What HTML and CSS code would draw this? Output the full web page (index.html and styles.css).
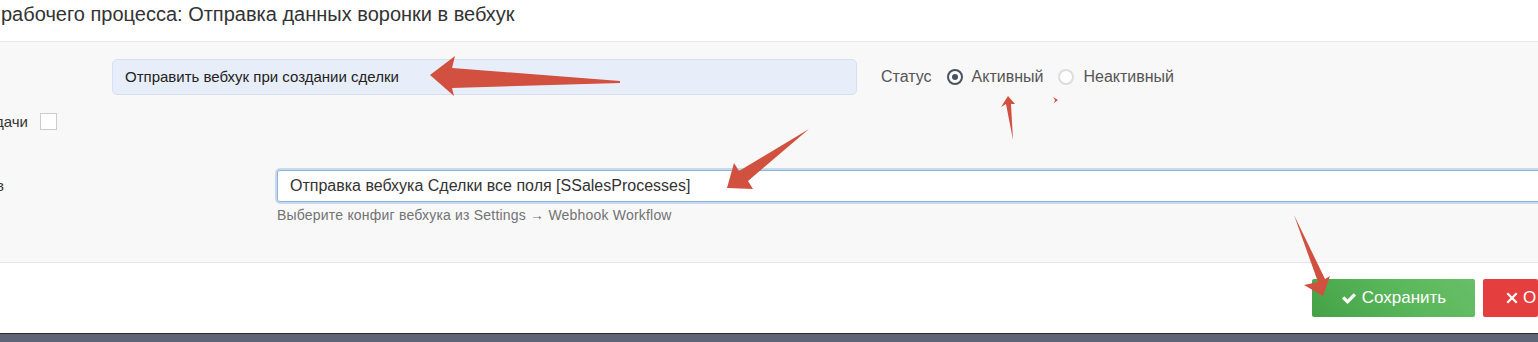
FILE: index.html
```html
<!DOCTYPE html>
<html>
<head>
    <meta name="viewport" content="width=device-width, initial-scale=1">
    <title>Workflow</title>
    <link rel="stylesheet" href="styles.css">
</head>
<body>
    <div class="page">
        <div class="modal-header">
            <h4 class="modal-title">рабочего процесса: Отправка данных воронки в вебхук</h4>
        </div>
        <div class="modal-body">
            <div class="row-top">
                <div class="name-box">Отправить вебхук при создании сделки</div>
                <div class="status-group">
                    <span class="status-label">Статус</span>
                    <label class="radio"><span class="radio-dot checked"></span>Активный</label>
                    <label class="radio"><span class="radio-dot"></span>Неактивный</label>
                </div>
            </div>
            <div class="row-check">
                <span class="clip-label">дачи</span>
                <span class="checkbox"></span>
            </div>
            <div class="row-config">
                <span class="clip-label">в</span>
                <div class="config-field">
                    <div class="config-input">Отправка вебхука Сделки все поля [SSalesProcesses]</div>
                    <div class="help-text">Выберите конфиг вебхука из Settings → Webhook Workflow</div>
                </div>
            </div>
        </div>
        <div class="modal-footer">
            <button class="btn btn-save">
                <svg class="btn-icon" width="16" height="14" viewBox="0 0 16 14"><path d="M1 7.5l2.3-2.3 3.2 3.2L12.7 2.2 15 4.5 6.5 13z" fill="#fff"/></svg>Сохранить
            </button>
            <button class="btn btn-cancel">
                <svg class="btn-icon" width="12" height="12" viewBox="0 0 12 12"><path d="M2 0.5L6 4.5 10 0.5 11.5 2 7.5 6 11.5 10 10 11.5 6 7.5 2 11.5 0.5 10 4.5 6 0.5 2z" fill="#fff"/></svg>О
            </button>
        </div>
        <div class="taskbar"></div>

        <!-- annotation arrows drawn over the screenshot -->
        <svg class="arrows" width="1538" height="342" viewBox="0 0 1538 342">
            <polygon points="430,75 455,56 452,68 620,81 620,83 452,88 454,96" />
            <polygon points="727,188 734,163 739,171 809,129 748,181 753,189" />
            <polygon points="1008,96 1015,104 1011,104 1013,140 1006,104 1001,107" />
            <polygon points="1053,97 1058,100 1054,103 1055,100" />
            <polygon points="1294,215 1318,282 1304,285 1323,296 1330,276 1325,279" />
        </svg>
    </div>
</body>
</html>
```

FILE: styles.css
```css
body {
    margin: 0;
    background: #fff;
    color: #333;
    font-family: "Liberation Sans", Arial, Helvetica, sans-serif;
}

.page {
    position: relative;
    width: 1538px;
    height: 342px;
    overflow: hidden;
}

.modal-header {
    height: 42px;
    border-bottom: 1px solid #e9e9e9;
    box-sizing: border-box;
}

.modal-title {
    margin: 0;
    padding: 0 0 0 1px;
    font-size: 20px;
    font-weight: normal;
    line-height: 28px;
    color: #333;
}

.modal-body {
    background: #f8f8f9;
    height: 221px;
    border-bottom: 1px solid #e6e6e6;
    box-sizing: border-box;
    padding-top: 17px;
}

.row-top {
    display: flex;
    align-items: center;
    padding-left: 112px;
}

.name-box {
    width: 745px;
    height: 36px;
    box-sizing: border-box;
    background: #e8eef9;
    border: 1px solid #d8e0ee;
    border-radius: 5px;
    padding-left: 12px;
    font-size: 15px;
    line-height: 34px;
    color: #222;
}

.status-group {
    display: flex;
    align-items: center;
    margin-left: 24px;
    font-size: 16px;
    color: #555;
}

.status-label {
    margin-right: 15px;
}

.radio {
    display: flex;
    align-items: center;
    margin-right: 15px;
}

.radio-dot {
    width: 16px;
    height: 16px;
    box-sizing: border-box;
    border: 2px solid #ddd;
    border-radius: 50%;
    background: #fff;
    margin-right: 9px;
    display: flex;
    align-items: center;
    justify-content: center;
}

.radio-dot.checked {
    border-color: #4a5160;
}

.radio-dot.checked::after {
    content: "";
    width: 6px;
    height: 6px;
    border-radius: 50%;
    background: #4a5160;
}

.clip-label {
    font-size: 15px;
    color: #333;
    white-space: nowrap;
    text-align: right;
}

.row-check {
    display: grid;
    grid-template-columns: 40px 17px;
    align-items: center;
    margin-top: 18px;
}

.row-check .clip-label {
    padding-right: 12px;
    direction: rtl;
    overflow: hidden;
}

.checkbox {
    width: 17px;
    height: 17px;
    box-sizing: border-box;
    border: 1px solid #ccc;
    background: #fff;
}

.row-config {
    display: grid;
    grid-template-columns: 277px 1300px;
    align-items: start;
    margin-top: 40px;
}

.row-config .clip-label {
    margin-left: -4px;
    text-align: left;
    line-height: 32px;
}

.config-input {
    height: 32px;
    box-sizing: border-box;
    border: 1px solid #8eb3d9;
    border-radius: 3px;
    background: #fff;
    box-shadow: 0 0 0 2px #c7d9ec;
    padding-left: 12px;
    font-size: 16px;
    line-height: 30px;
    color: #333;
}

.help-text {
    margin-top: 5px;
    font-size: 14px;
    letter-spacing: 0.2px;
    color: #737373;
}

.modal-footer {
    height: 70px;
    display: flex;
    align-items: flex-start;
    padding-top: 16px;
    padding-left: 1312px;
    box-sizing: border-box;
    gap: 8px;
}

.btn {
    flex: none;
    height: 38px;
    border: 0;
    border-radius: 2px;
    color: #fff;
    font-family: inherit;
    font-size: 17px;
    display: flex;
    align-items: center;
    justify-content: center;
    padding: 0;
}

.btn-icon {
    margin-right: 5px;
}

.btn-save {
    width: 163px;
    background: linear-gradient(45deg, #45a145 0%, #5cb85c 60%, #67bf67 100%);
}

.btn-cancel {
    width: 55px;
    justify-content: flex-start;
    padding-left: 23px;
    background: #e53e3e;
}

.taskbar {
    height: 9px;
    border-top: 1px solid #2a2a2a;
    background: #5e6577;
}

.arrows {
    position: absolute;
    left: 0;
    top: 0;
    fill: #d2503f;
    pointer-events: none;
}
```
